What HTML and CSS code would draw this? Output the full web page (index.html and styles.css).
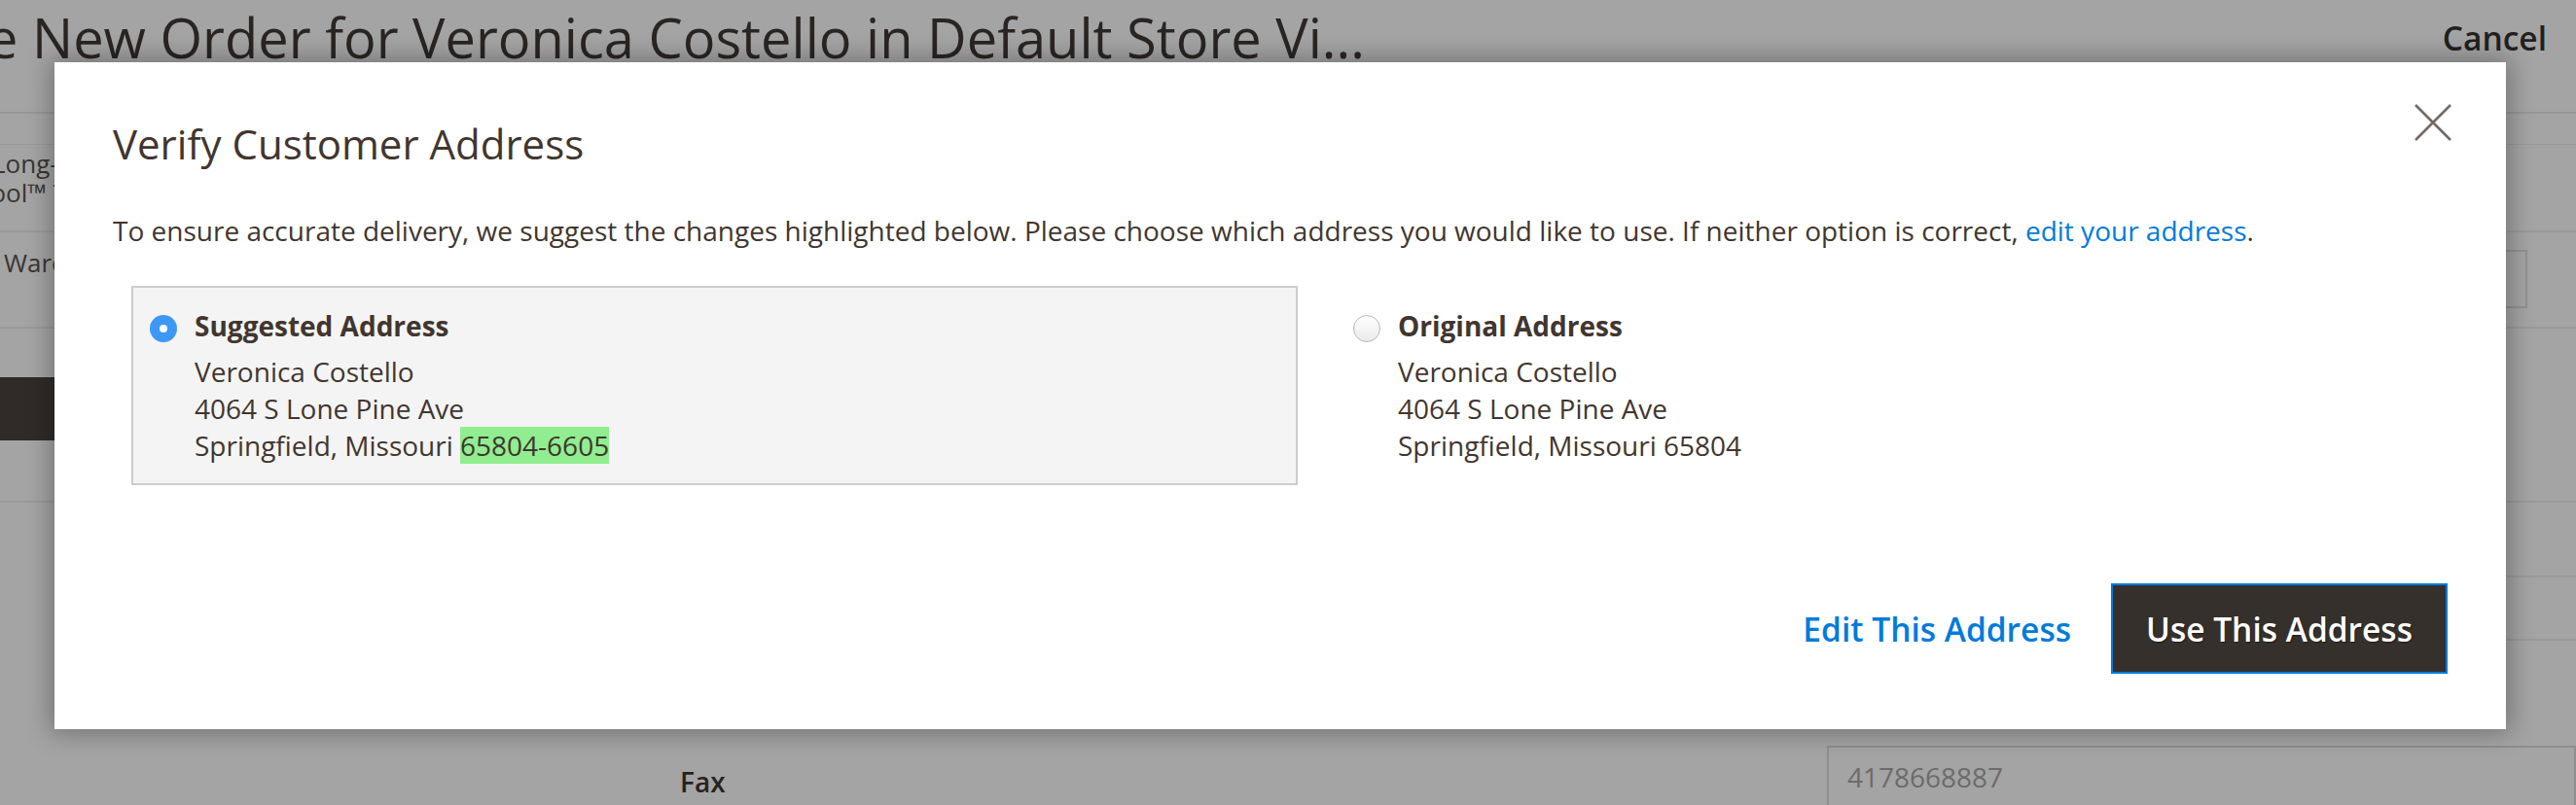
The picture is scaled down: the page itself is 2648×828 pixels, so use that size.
FILE: index.html
```html
<!DOCTYPE html>
<html lang="en">
<head>
<meta charset="utf-8">
<title>Verify Customer Address</title>
<link rel="stylesheet" href="styles.css">
</head>
<body>
<div class="page">
  <header class="page-header">
    <h1 class="page-title">e New Order for Veronica Costello in Default Store Vi...</h1>
    <span class="page-cancel">Cancel</span>
  </header>
  <div class="subbar"></div>
  <section class="items">
    <div class="item-row row-a">
      <div class="item-name">
        <span class="name-line line-1">Long-</span>
        <span class="name-line line-2">Cool™ Tee</span>
      </div>
    </div>
    <div class="item-row row-b">
      <span class="item-name wh">Warehouse</span>
      <span class="qty-box"></span>
    </div>
    <div class="items-actions"><span class="dark-btn"></span></div>
    <div class="rule rule-a"></div>
    <div class="rule rule-b"></div>
    <div class="rule rule-c"></div>
  </section>
  <section class="form-row">
    <label class="form-label">Fax</label>
    <div class="form-input">4178668887</div>
  </section>
</div>

<div class="modal">
  <button class="modal-close" type="button" aria-label="Close">
    <svg viewBox="0 0 38 38" width="38" height="38"><path d="M1 1 L37 37 M37 1 L1 37" stroke="#736963" stroke-width="2.6" fill="none"/></svg>
  </button>
  <h2 class="modal-title">Verify Customer Address</h2>
  <p class="modal-text">To ensure accurate delivery, we suggest the changes highlighted below. Please choose which address you would like to use. If neither option is correct, <a class="link" href="#">edit your address</a>.</p>
  <div class="options">
    <div class="option selected">
      <span class="radio radio-on"></span>
      <div class="address">
        <div class="address-title">Suggested Address</div>
        <div>Veronica Costello</div>
        <div>4064 S Lone Pine Ave</div>
        <div>Springfield, Missouri <mark class="hl">65804-6605</mark></div>
      </div>
    </div>
    <div class="option other">
      <span class="radio radio-off"></span>
      <div class="address">
        <div class="address-title">Original Address</div>
        <div>Veronica Costello</div>
        <div>4064 S Lone Pine Ave</div>
        <div>Springfield, Missouri 65804</div>
      </div>
    </div>
  </div>
  <div class="modal-footer">
    <a class="edit-link" href="#">Edit This Address</a>
    <button class="use-btn" type="button">Use This Address</button>
  </div>
</div>
</body>
</html>
```
FILE: styles.css
```css
* { box-sizing: border-box; }
html, body { margin: 0; padding: 0; }
body {
  width: 2648px;
  height: 828px;
  overflow: hidden;
  position: relative;
  background: #a4a4a4;
  font-family: "Open Sans", "Liberation Sans", sans-serif;
}

/* dimmed background page */
.page { width: 2648px; }
.page-header {
  height: 117px;
  border-bottom: 2px solid #979797;
  display: flex;
  justify-content: space-between;
  align-items: flex-start;
}
.page-title {
  margin: -1px 0 0 -13px;
  font-size: 56px;
  line-height: 78px;
  font-weight: 400;
  color: #2a2523;
  white-space: nowrap;
}
.page-cancel {
  margin: 17px 30px 0 0;
  font-size: 33.5px;
  line-height: 44px;
  font-weight: 600;
  color: #231f1e;
}
.subbar { height: 32px; border-bottom: 1px solid #989898; }
.item-row {
  display: flex;
  justify-content: space-between;
  align-items: flex-start;
  border-bottom: 2px solid #999999;
}
.row-a { height: 90px; padding-top: 4px; }
.row-b { height: 99px; padding-top: 16px; }
.item-name {
  font-size: 26px;
  line-height: 30px;
  color: #3a3532;
  white-space: nowrap;
}
.name-line { display: block; }
.line-1 { margin-left: -8px; }
.line-2 { margin-left: -26px; }
.wh { margin-left: 4px; }
.qty-box {
  width: 300px;
  height: 60px;
  margin: 2px 50px 0 0;
  border: 2px solid #919191;
}
.items-actions { padding-top: 50px; }
.dark-btn { display: block; width: 420px; height: 65px; background: #302b28; }
.rule { border-top: 2px solid #999999; }
.rule-a { margin-top: 62px; }
.rule-b { margin: 75px 0 0 2000px; }
.rule-c { margin: 63px 0 0 2000px; }
.form-row {
  margin-top: 108px;
  display: grid;
  grid-template-columns: 1878px 1fr;
  align-items: start;
}
.form-label {
  padding: 18px 0 0 699px;
  font-size: 28px;
  line-height: 38px;
  font-weight: 600;
  color: #262220;
}
.form-input {
  height: 66px;
  border: 2px solid #8e8e8e;
  padding: 11px 19px;
  font-size: 28px;
  line-height: 38px;
  color: #6b6b6b;
}

/* modal */
.modal {
  position: absolute;
  left: 56px;
  top: 64px;
  width: 2520px;
  padding: 60px 60px 57px;
  background: #ffffff;
  color: #41362f;
  box-shadow: 0 0 24px 4px rgba(0, 0, 0, 0.3);
}
.modal-close {
  position: absolute;
  right: 56px;
  top: 43px;
  width: 38px;
  height: 38px;
  padding: 0;
  border: 0;
  background: none;
}
.modal-close svg { display: block; }
.modal-title {
  margin: 0;
  font-size: 42px;
  line-height: 48px;
  font-weight: 400;
}
.modal-text {
  margin: 46px 0 0;
  font-size: 28px;
  line-height: 38px;
}
.link { color: #007bdb; text-decoration: none; }
.options {
  display: flex;
  gap: 38px;
  margin-top: 38px;
  padding-left: 19px;
}
.option {
  flex: none;
  width: 1199px;
  border: 2px solid transparent;
  padding: 20px 17px;
  display: flex;
  gap: 18px;
  align-items: flex-start;
}
.option.other { flex: 1 1 auto; width: auto; min-width: 0; }
.option.selected { background: #f4f4f4; border-color: #cccccc; }
.radio {
  flex: none;
  width: 28px;
  height: 28px;
  margin-top: 8px;
  border-radius: 50%;
  position: relative;
}
.radio-on { background: #3d98f5; }
.radio-on::after {
  content: "";
  position: absolute;
  left: 10px;
  top: 10px;
  width: 8px;
  height: 8px;
  border-radius: 50%;
  background: #ffffff;
}
.radio-off {
  border: 1px solid #b8b8b8;
  background: linear-gradient(#ffffff, #eaeaea);
}
.address { font-size: 28px; line-height: 38px; }
.address-title { font-weight: 700; margin-bottom: 9px; }
.hl { background: #90ee90; color: inherit; }
.modal-footer {
  margin-top: 101px;
  display: flex;
  justify-content: flex-end;
  align-items: center;
  gap: 41px;
}
.edit-link {
  font-size: 33.5px;
  font-weight: 600;
  color: #007bdb;
  text-decoration: none;
}
.use-btn {
  height: 93px;
  padding: 0 34px;
  border: 2px solid #007bdb;
  background: #36302c;
  color: #ffffff;
  font-family: "Open Sans", "Liberation Sans", sans-serif;
  font-size: 33.5px;
  font-weight: 600;
  text-shadow: 1px 1px 1px rgba(0, 0, 0, 0.45);
}
```
